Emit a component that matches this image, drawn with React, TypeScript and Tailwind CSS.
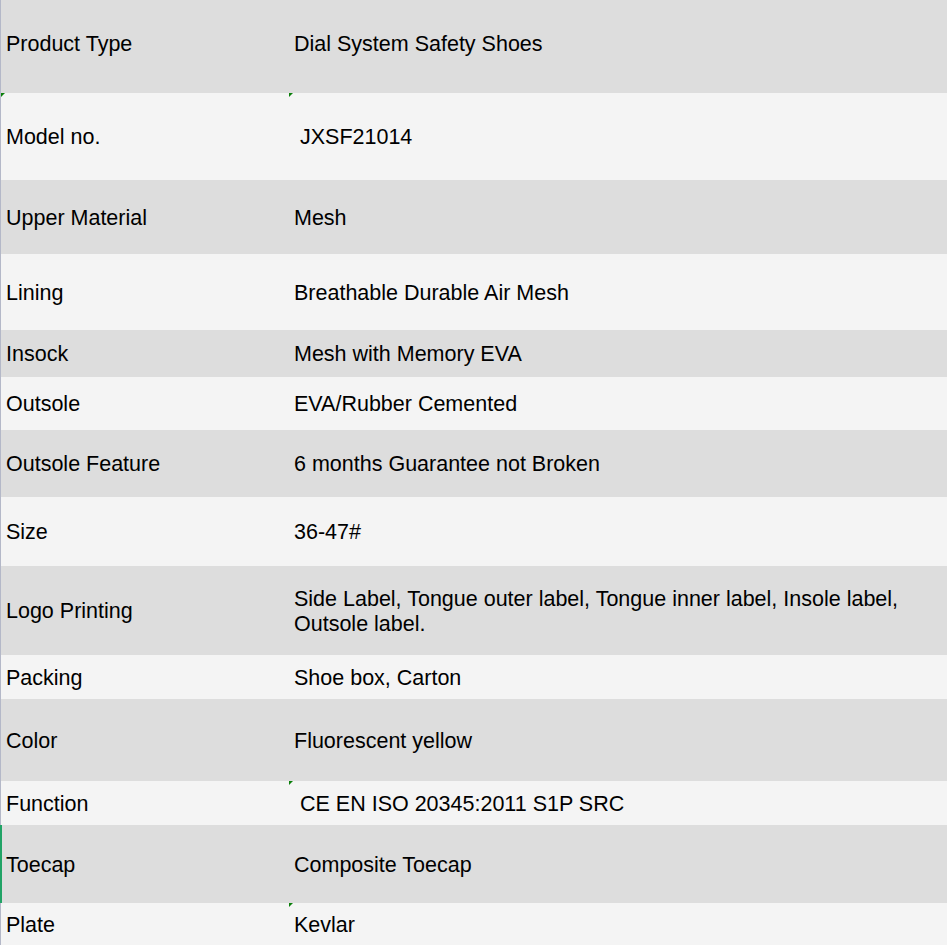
const rows: { label: string; value: string; h: number; tri?: [boolean, boolean] }[] = [
	{ label: "Product Type", value: "Dial System Safety Shoes", h: 93 },
	{ label: "Model no.", value: "\u00a0JXSF21014", h: 87, tri: [true, true] },
	{ label: "Upper Material", value: "Mesh", h: 74 },
	{ label: "Lining", value: "Breathable Durable Air Mesh", h: 76 },
	{ label: "Insock", value: "Mesh with Memory EVA", h: 47 },
	{ label: "Outsole", value: "EVA/Rubber Cemented", h: 53 },
	{ label: "Outsole Feature", value: "6 months Guarantee not Broken", h: 67 },
	{ label: "Size", value: "36-47#", h: 69 },
	{
		label: "Logo Printing",
		value: "Side Label, Tongue outer label, Tongue inner label, Insole label, Outsole label.",
		h: 89,
	},
	{ label: "Packing", value: "Shoe box, Carton", h: 44 },
	{ label: "Color", value: "Fluorescent yellow", h: 82 },
	{ label: "Function", value: "\u00a0CE EN ISO 20345:2011 S1P SRC", h: 44, tri: [false, true] },
	{ label: "Toecap", value: "Composite Toecap", h: 78 },
	{ label: "Plate", value: "Kevlar", h: 42, tri: [false, true] },
];

function Tri() {
	return <span className="absolute left-0 top-0 w-0 h-0 border-t-[4px] border-t-[#0a7f0a] border-r-[4px] border-r-transparent" />;
}

export default function App() {
	return (
		<div className="w-[947px] h-[945px] overflow-hidden flex flex-col text-black text-[21.5px] leading-[25px] font-['Liberation_Sans',Arial,sans-serif]">
			{rows.map((r, i) => {
				const pad = i === 0 ? "pb-[5px]" : "pt-[2px]";
				return (
					<div
						key={r.label}
						className={`flex ${i === 12 ? "border-l-2 border-l-[#21a366]" : "border-l border-l-[#b4b8c8]"} ${i % 2 === 0 ? "bg-[#dddddd]" : "bg-[#f4f4f4]"}`}
						style={{ height: r.h }}
					>
						<div className={`relative ${i === 12 ? "w-[287px] pl-[4px]" : "w-[288px] pl-[5px]"} ${pad} shrink-0 flex items-center`}>
							{r.tri?.[0] && <Tri />}
							{r.label}
						</div>
						<div className={`relative flex-1 flex items-center pl-[5px] pr-4 ${pad}`}>
							{r.tri?.[1] && <Tri />}
							<span>{r.value}</span>
						</div>
					</div>
				);
			})}
		</div>
	);
}
